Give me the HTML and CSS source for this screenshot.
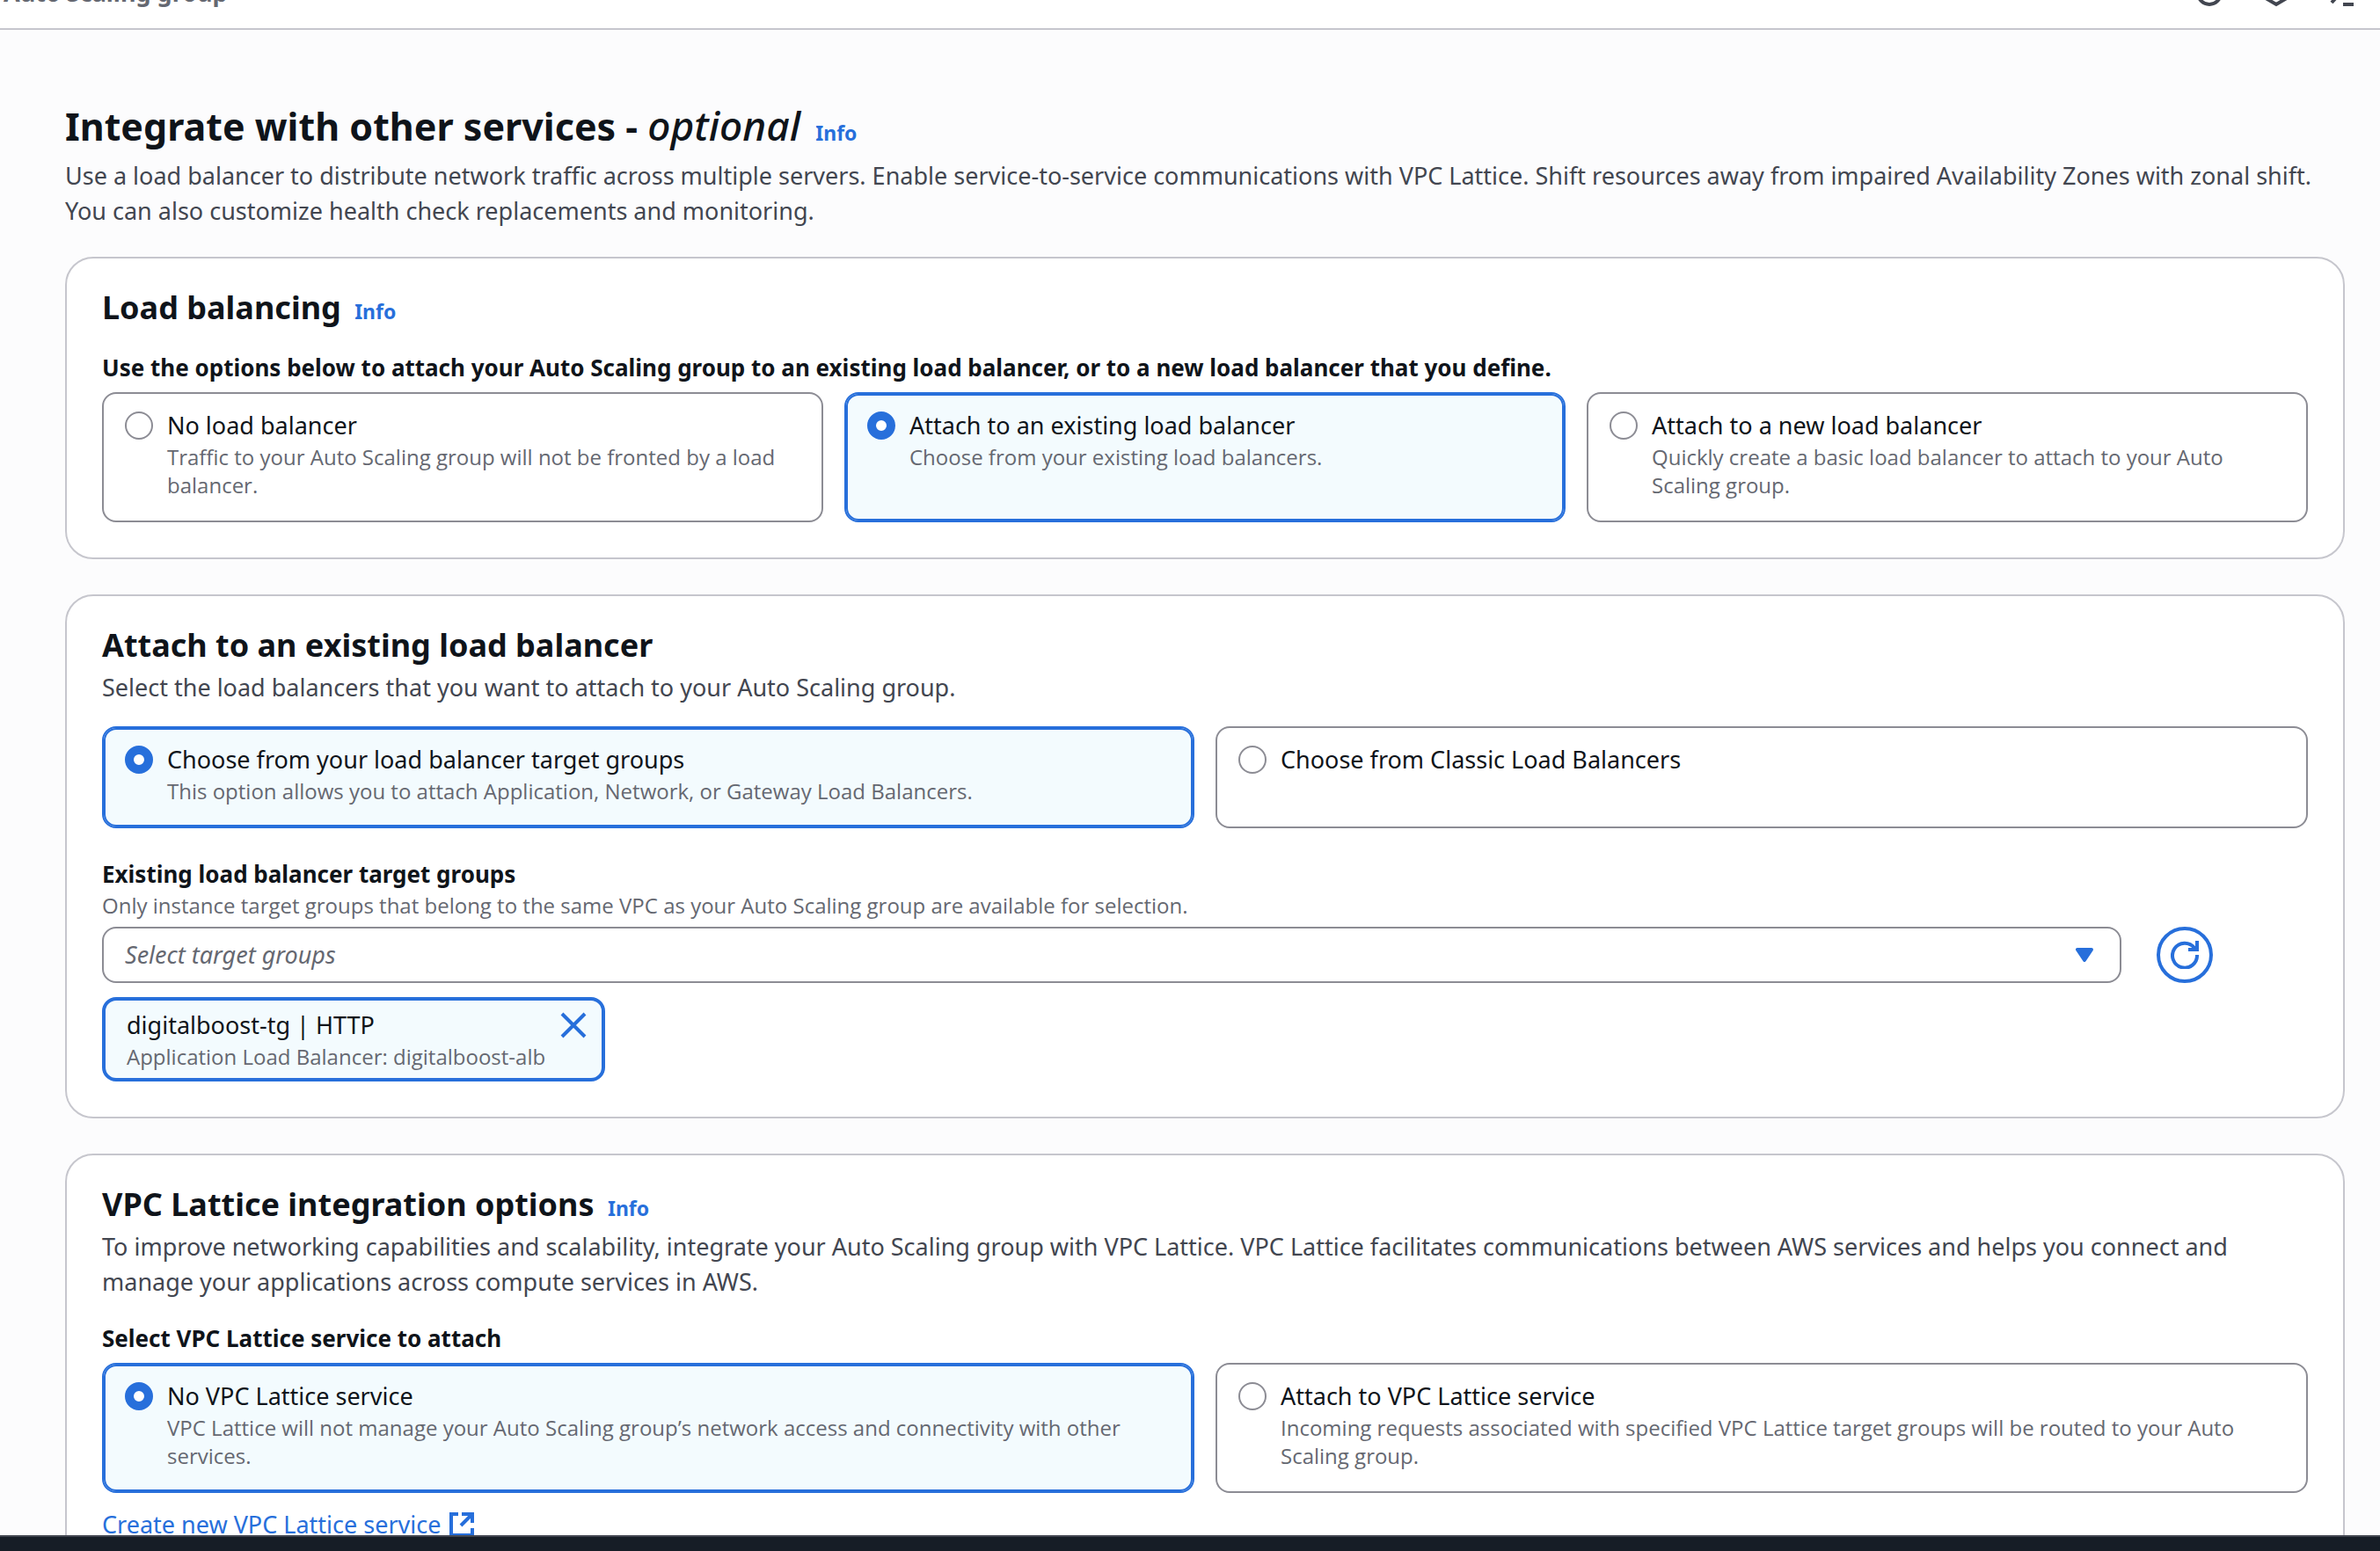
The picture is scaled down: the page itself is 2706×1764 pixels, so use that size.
FILE: index.html
```html
<!DOCTYPE html>
<html lang="en">
<head>
<meta charset="utf-8">
<title>Create Auto Scaling group</title>
<link rel="stylesheet" href="styles.css">
</head>
<body>
<header class="topbar">
  <span class="crumb">Auto Scaling group</span>
  <div class="tools">
    <button class="tool" type="button" aria-label="Help"><svg viewBox="0 0 32 32"><circle cx="16" cy="16" r="13"/></svg></button>
    <button class="tool" type="button" aria-label="Amazon Q"><svg viewBox="0 0 32 32"><path d="M16 3 27 9.500V22.500L16 29 5 22.500V9.500Z"/></svg></button>
    <button class="tool" type="button" aria-label="CloudShell"><svg viewBox="0 0 32 32"><path d="M3 6 13 16 3 27M16 29H28"/></svg></button>
  </div>
</header>
<main class="content">
  <div class="page-head">
    <h1>Integrate with other services - <em>optional</em> <a class="info" href="#">Info</a></h1>
    <p class="desc">Use a load balancer to distribute network traffic across multiple servers. Enable service-to-service communications with VPC Lattice. Shift resources away from impaired Availability Zones with zonal shift. You can also customize health check replacements and monitoring.</p>
  </div>

  <section class="card">
    <h2>Load balancing <a class="info" href="#">Info</a></h2>
    <fieldset class="field">
      <legend>Use the options below to attach your Auto Scaling group to an existing load balancer, or to a new load balancer that you define.</legend>
      <div class="tiles three">
        <label class="tile"><input type="radio" name="lb"><span class="tile-text"><span class="name">No load balancer</span><span class="hint">Traffic to your Auto Scaling group will not be fronted by a load balancer.</span></span></label>
        <label class="tile"><input type="radio" name="lb" checked><span class="tile-text"><span class="name">Attach to an existing load balancer</span><span class="hint">Choose from your existing load balancers.</span></span></label>
        <label class="tile"><input type="radio" name="lb"><span class="tile-text"><span class="name">Attach to a new load balancer</span><span class="hint">Quickly create a basic load balancer to attach to your Auto Scaling group.</span></span></label>
      </div>
    </fieldset>
  </section>

  <section class="card">
    <h2>Attach to an existing load balancer</h2>
    <p class="desc">Select the load balancers that you want to attach to your Auto Scaling group.</p>
    <div class="tiles two" role="radiogroup" aria-label="Load balancer type">
      <label class="tile"><input type="radio" name="kind" checked><span class="tile-text"><span class="name">Choose from your load balancer target groups</span><span class="hint">This option allows you to attach Application, Network, or Gateway Load Balancers.</span></span></label>
      <label class="tile"><input type="radio" name="kind"><span class="tile-text"><span class="name">Choose from Classic Load Balancers</span></span></label>
    </div>
    <div class="target-groups">
      <label class="label" for="tg">Existing load balancer target groups</label>
      <span class="hint">Only instance target groups that belong to the same VPC as your Auto Scaling group are available for selection.</span>
      <div class="select-row">
        <div class="select-wrap">
          <select id="tg"><option>Select target groups</option></select>
          <svg class="caret" viewBox="0 0 20 16"><path d="M2 2H18L10 14Z"/></svg>
        </div>
        <button class="refresh" type="button" aria-label="Refresh"><svg viewBox="0 0 32 32"><path d="M30 16A14 14 0 1 1 27 8L29 10M30 0V10H20"/></svg></button>
      </div>
      <div class="token">
        <div><span class="name">digitalboost-tg | HTTP</span><span class="hint">Application Load Balancer: digitalboost-alb</span></div>
        <button class="remove" type="button" aria-label="Remove digitalboost-tg"><svg viewBox="0 0 32 32"><path d="M3 3 29 29M29 3 3 29"/></svg></button>
      </div>
    </div>
  </section>

  <section class="card">
    <h2>VPC Lattice integration options <a class="info" href="#">Info</a></h2>
    <p class="desc">To improve networking capabilities and scalability, integrate your Auto Scaling group with VPC Lattice. VPC Lattice facilitates communications between AWS services and helps you connect and manage your applications across compute services in AWS.</p>
    <fieldset class="field">
      <legend>Select VPC Lattice service to attach</legend>
      <div class="tiles two">
        <label class="tile"><input type="radio" name="lattice" checked><span class="tile-text"><span class="name">No VPC Lattice service</span><span class="hint">VPC Lattice will not manage your Auto Scaling group’s network access and connectivity with other services.</span></span></label>
        <label class="tile"><input type="radio" name="lattice"><span class="tile-text"><span class="name">Attach to VPC Lattice service</span><span class="hint">Incoming requests associated with specified VPC Lattice target groups will be routed to your Auto Scaling group.</span></span></label>
      </div>
    </fieldset>
    <a class="create" href="#">Create new VPC Lattice service <svg viewBox="0 0 32 32"><path d="M12 4H4V28H28V20M16 4H28V14M28 4 15 17"/></svg></a>
  </section>
</main>
<footer class="footer"></footer>
</body>
</html>
```

FILE: styles.css
```css
:root {
  --blue: #276fdb;
  --text: #0f141a;
  --body: #424650;
  --muted: #656871;
  --line: #c6c6cd;
  --control: #8c8c94;
}
* { box-sizing: border-box; }
body {
  margin: 0;
  height: 100vh;
  display: flex;
  flex-direction: column;
  overflow: hidden;
  background: #fcfcfd;
  color: var(--text);
  font: 27px/40px "Noto Sans", "Open Sans", sans-serif;
}
h1, h2, p { margin: 0; }
a { color: var(--blue); text-decoration: none; }
button { margin: 0; padding: 0; border: 0; background: none; cursor: pointer; }
svg { display: block; fill: none; stroke: currentColor; stroke-width: 4; }

.topbar {
  flex: none;
  height: 34px;
  display: flex;
  align-items: flex-end;
  justify-content: space-between;
  overflow: hidden;
  padding: 0 26px 20px 4px;
  border-bottom: 2px solid var(--line);
  background: #fff;
}
.crumb { color: var(--muted); font-weight: 700; }
.tools { display: flex; gap: 44px; padding-bottom: 4px; color: var(--body); }
.tool, .tool svg { width: 32px; height: 32px; color: inherit; }

.content {
  flex: 1;
  min-height: 0;
  overflow: hidden;
  padding: 80px 40px 0 74px;
}
.page-head { margin-bottom: 32px; }
h1 { font-size: 43px; line-height: 60px; font-weight: 700; margin-bottom: 6px; }
h1 em { font-size: 46px; line-height: 48px; font-weight: 500; }
h2 { font-size: 36px; line-height: 48px; font-weight: 700; }
.info { font-size: 23px; line-height: 32px; font-weight: 700; margin-left: 6px; }
.desc { color: var(--body); }
h2 + .desc { margin-top: 4px; }

.card {
  margin-bottom: 40px;
  padding: 32px 40px 40px;
  border: 2px solid var(--line);
  border-radius: 32px;
  background: #fff;
}
.field { margin: 24px 0 0; padding: 0; border: 0; min-width: 0; }
legend, .label { display: block; padding: 0; font-size: 26px; font-weight: 700; }
.tiles { display: grid; gap: 24px; }
.field .tiles { margin-top: 8px; }
.desc + .tiles { margin-top: 24px; }
.three { grid-template-columns: repeat(3, 1fr); }
.two { grid-template-columns: repeat(2, 1fr); }
.tile {
  display: flex;
  align-items: flex-start;
  gap: 16px;
  padding: 16px 24px 24px;
  border: 2px solid var(--control);
  border-radius: 16px;
}
.tile:has(:checked) {
  border-color: var(--blue);
  background: #f3fbfe;
  box-shadow: inset 0 0 0 2px var(--blue);
}
.tile input {
  appearance: none;
  flex: none;
  width: 32px;
  height: 32px;
  margin: 4px 0 0;
  border: 2px solid var(--control);
  border-radius: 50%;
  background: #fff;
}
.tile input:checked { border: 10px solid var(--blue); }
.name, .hint { display: block; }
.hint { color: var(--muted); font: 24px/32px "Open Sans", "Noto Sans", sans-serif; }

.target-groups { margin-top: 32px; }
.select-row {
  display: grid;
  grid-template-columns: repeat(12, 1fr);
  gap: 40px;
  margin: 8px 0 16px;
}
.select-wrap { grid-column: span 11; position: relative; }
select {
  appearance: none;
  display: block;
  width: 100%;
  height: 64px;
  padding: 0 72px 0 24px;
  border: 2px solid var(--control);
  border-radius: 16px;
  background: #fff;
  color: var(--muted);
  font: inherit;
  font-style: italic;
}
.caret {
  position: absolute;
  right: 32px;
  top: 24px;
  width: 20px;
  height: 16px;
  pointer-events: none;
  color: var(--blue);
  fill: currentColor;
  stroke-linejoin: round;
}
.refresh {
  display: grid;
  place-items: center;
  width: 64px;
  height: 64px;
  border: 4px solid var(--blue);
  border-radius: 50%;
  color: var(--blue);
}
.refresh svg { width: 32px; height: 32px; }
.token {
  display: flex;
  justify-content: space-between;
  align-items: flex-start;
  width: 572px;
  padding: 8px 16px 8px 24px;
  border: 4px solid var(--blue);
  border-radius: 16px;
  background: #f3fbfe;
}
.remove { margin-top: 4px; color: var(--blue); }
.remove svg { width: 32px; height: 32px; }
.create { display: inline-flex; align-items: center; gap: 8px; margin-top: 16px; }
.create svg { width: 32px; height: 32px; }

.footer {
  flex: none;
  height: 18px;
  border-top: 2px solid #424650;
  background: #161d26;
}
```
